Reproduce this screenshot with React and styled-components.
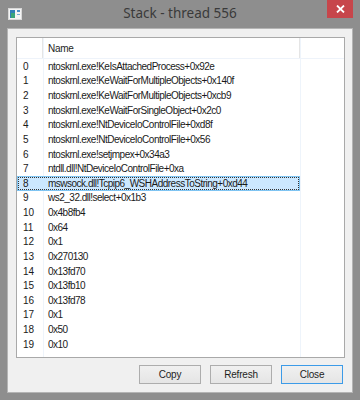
import React from "react";
import styled, { createGlobalStyle } from "styled-components";

const Global = createGlobalStyle`
  html, body { margin: 0; padding: 0; background: #8e8e8e; }
  * { box-sizing: border-box; }
`;

const Window = styled.div`
  width: 360px;
  height: 400px;
  background: #8e8e8e;
  display: flex;
  flex-direction: column;
  padding: 0 7px 7px 7px;
  font-family: "Liberation Sans", Arial, sans-serif;
`;

const TitleBar = styled.div`
  height: 28px;
  position: relative;
  display: flex;
  align-items: center;
  justify-content: center;
`;

const AppIcon = styled.svg`
  position: absolute;
  left: 1px;
  top: 8px;
`;

const Title = styled.div`
  font-family: "Noto Sans", "Open Sans", sans-serif;
  font-size: 13.5px;
  color: #3a3a3a;
  margin-top: -2px;
`;

const CloseX = styled.div`
  position: absolute;
  right: 0;
  top: 0;
  width: 26px;
  height: 18px;
  background: #c7464b;
  display: flex;
  align-items: center;
  justify-content: center;
`;

const Client = styled.div`
  flex: 1;
  background: #f0f0f0;
  border: 1px solid #b4b4b4;
  padding: 8px 7px 0 8px;
  display: flex;
  flex-direction: column;
`;

const List = styled.div`
  height: 321px;
  background: #fff;
  border: 1px solid #a9a9a9;
  position: relative;
  overflow: hidden;
`;

const ColLine = styled.div`
  position: absolute;
  top: 0;
  bottom: 0;
  left: ${(p) => p.$x}px;
  width: 1px;
  background: ${(p) => p.$c};
`;

const Header = styled.div`
  height: 21px;
  display: grid;
  grid-template-columns: 26px 257px 1fr;
  border-bottom: 1px solid #eef3fa;
  font-size: 10px;
  letter-spacing: -0.3px;
  color: #1e1e1e;
`;

const HeadCell = styled.div`
  display: flex;
  align-items: center;
  padding-left: 5px;
  padding-top: 1px;
  border-right: ${(p) => (p.$last ? "none" : "1px solid #e5e5e5")};
`;

const Row = styled.div`
  width: 283px;
  height: 14.63px;
  display: grid;
  grid-template-columns: 26px 257px;
  align-items: center;
  font-size: 10px;
  letter-spacing: -0.5px;
  color: #1a1a1a;
  position: relative;
  ${(p) =>
    p.$sel &&
    `
    background: #cce8ff;
    outline: 1px solid #7fc4f2;
    outline-offset: -1px;
  `}
`;

const Focus = styled.div`
  position: absolute;
  inset: 1px 1px 1px 1px;
  border: 1px dotted #333;
  pointer-events: none;
`;

const Idx = styled.div`
  padding-left: 6px;
  letter-spacing: 0;
`;

const Name = styled.div`
  padding-left: 5px;
  white-space: nowrap;
`;

const Buttons = styled.div`
  display: flex;
  justify-content: flex-end;
  gap: 9px;
  padding: 7px 2px 0 0;
`;

const Button = styled.button`
  width: 62px;
  height: 19px;
  font-family: "Liberation Sans", Arial, sans-serif;
  font-size: 10px;
  letter-spacing: -0.2px;
  color: #1e1e1e;
  background: linear-gradient(#f0f0f0, #e5e5e5);
  border: 1px solid ${(p) => (p.$def ? "#3c9be8" : "#adadad")};
  padding: 0;
  margin: 0;
`;

const rows = [
  "ntoskrnl.exe!KeIsAttachedProcess+0x92e",
  "ntoskrnl.exe!KeWaitForMultipleObjects+0x140f",
  "ntoskrnl.exe!KeWaitForMultipleObjects+0xcb9",
  "ntoskrnl.exe!KeWaitForSingleObject+0x2c0",
  "ntoskrnl.exe!NtDeviceIoControlFile+0xd8f",
  "ntoskrnl.exe!NtDeviceIoControlFile+0x56",
  "ntoskrnl.exe!setjmpex+0x34a3",
  "ntdll.dll!NtDeviceIoControlFile+0xa",
  "mswsock.dll!Tcpip6_WSHAddressToString+0xd44",
  "ws2_32.dll!select+0x1b3",
  "0x4b8fb4",
  "0x64",
  "0x1",
  "0x270130",
  "0x13fd70",
  "0x13fb10",
  "0x13fd78",
  "0x1",
  "0x50",
  "0x10",
];

export default function App() {
  return (
    <>
      <Global />
      <Window>
        <TitleBar>
          <AppIcon width="14" height="12" viewBox="0 0 14 12">
            <rect x="0.5" y="0.5" width="13" height="11" fill="#f4f4f4" stroke="#d8d8d8" />
            <rect x="2" y="2" width="5" height="8" fill="#2f7fb8" />
            <rect x="3" y="5" width="4" height="5" fill="#3aa57a" />
            <rect x="9" y="2" width="3" height="2" fill="#4a90c8" />
            <rect x="9" y="6" width="3" height="1" fill="#7aaed6" />
          </AppIcon>
          <Title>Stack - thread 556</Title>
          <CloseX>
            <svg width="9" height="8" viewBox="0 0 9 8">
              <path d="M1 0.5 L8 7.5 M8 0.5 L1 7.5" stroke="#fff" strokeWidth="1.8" />
            </svg>
          </CloseX>
        </TitleBar>
        <Client>
          <List>
            <ColLine $x={26} $c="#eef4fb" />
            <ColLine $x={283} $c="#eef4fb" />
            <Header>
              <HeadCell />
              <HeadCell>Name</HeadCell>
              <HeadCell $last />
            </Header>
            {rows.map((r, i) => (
              <Row key={i} $sel={i === 8}>
                {i === 8 && <Focus />}
                <Idx>{i}</Idx>
                <Name>{r}</Name>
              </Row>
            ))}
          </List>
          <Buttons>
            <Button>Copy</Button>
            <Button>Refresh</Button>
            <Button $def>Close</Button>
          </Buttons>
        </Client>
      </Window>
    </>
  );
}
